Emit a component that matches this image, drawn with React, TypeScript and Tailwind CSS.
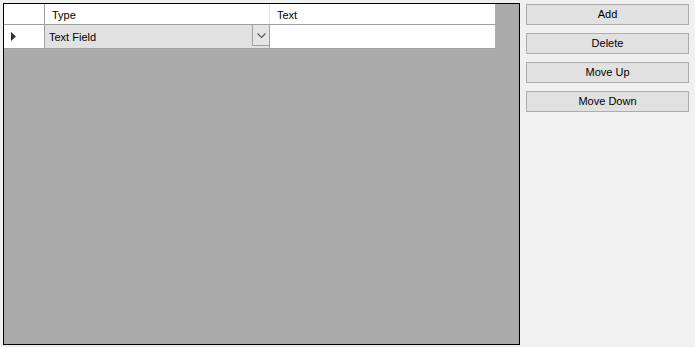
import React from "react";

const buttons = ["Add", "Delete", "Move Up", "Move Down"];

const App = () => {
  return (
    <div className="w-[695px] h-[347px] bg-[#f0f0f0] flex font-['Liberation_Sans',Arial,sans-serif] text-[11px] text-black">
      {/* Grid */}
      <div className="mt-[3px] ml-[3px] w-[517px] h-[342px] border border-black bg-[#ababab]">
        <div className="w-[491px] flex flex-col">
          {/* Header row */}
          <div className="flex h-[21px] bg-white border-b border-[#a0a0a0]">
            <div className="w-[41px] border-r border-[#a0a0a0]" />
            <div className="w-[225px] border-r border-[#e3e3e3] pl-[7px] leading-[20px] pt-[1px]">Type</div>
            <div className="flex-1 pl-[7px] leading-[20px] pt-[1px]">Text</div>
          </div>
          {/* Data row */}
          <div className="flex h-[24px] bg-white border-b border-[#a0a0a0]">
            <div className="w-[41px] border-r border-[#a0a0a0] flex items-center pl-[7px]">
              <svg width="6" height="9" viewBox="0 0 6 9">
                <path d="M0 0 L5 4.5 L0 9 Z" fill="#333" />
              </svg>
            </div>
            <div className="w-[225px] border-r border-[#a0a0a0] bg-[#e1e1e1] flex">
              <div className="flex-1 pl-[4px] leading-[22px] pt-[1px]">Text Field</div>
              <div className="w-[17px] h-[21px] border-l border-b border-[#a0a0a0] bg-[#e5e5e5] flex items-center justify-center">
                <svg width="9" height="5" viewBox="0 0 9 5">
                  <path d="M0.5 0.5 L4.5 4.5 L8.5 0.5" fill="none" stroke="#555" strokeWidth="1.1" />
                </svg>
              </div>
            </div>
            <div className="flex-1" />
          </div>
        </div>
      </div>
      {/* Buttons */}
      <div className="ml-[6px] mt-[4px] flex flex-col gap-[8px]">
        {buttons.map((b) => (
          <div
            key={b}
            className="w-[163px] h-[21px] bg-[#e1e1e1] border border-[#adadad] flex items-center justify-center"
          >
            {b}
          </div>
        ))}
      </div>
    </div>
  );
};

export default App;
